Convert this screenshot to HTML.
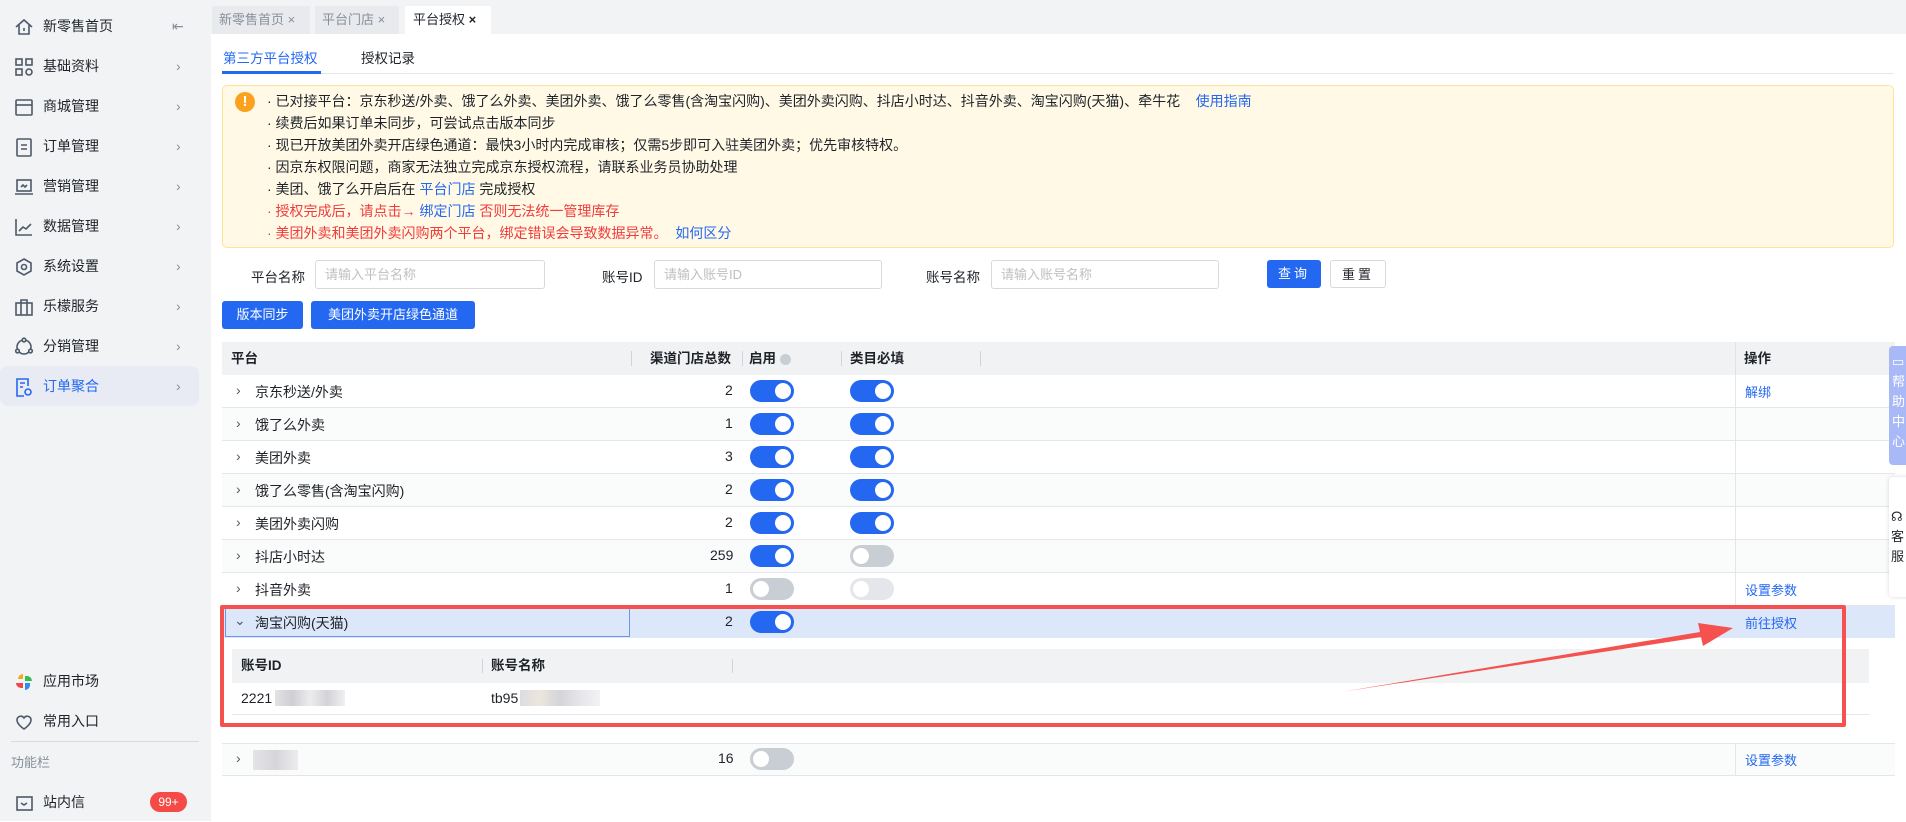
<!DOCTYPE html>
<html><head><meta charset="utf-8"><style>
*{box-sizing:border-box;margin:0;padding:0}
body{width:1906px;height:821px;overflow:hidden;background:#fff;font-family:"Liberation Sans","Noto Sans CJK SC",sans-serif;font-size:14px;color:#1f2329;position:relative}
.a{position:absolute;white-space:nowrap}
.side{left:0;top:0;width:211px;height:821px;background:#f2f3f5}
.mi{left:0;width:199px;height:40px;line-height:40px}
.mi .t{position:absolute;left:43px;top:0}
.mi .c{position:absolute;left:176px;top:0;color:#86909c;font-size:14px}
.mi svg{position:absolute;left:14px;top:11px}
.blue{color:#2468f2}
.tg{width:44px;height:22px;border-radius:11px;background:#2468f2}
.tg::after{content:"";position:absolute;right:3px;top:3px;width:16px;height:16px;border-radius:50%;background:#fff}
.tg.off{background:#c9cdd4}.tg.off::after{left:3px;right:auto}
.tg.dis{background:#e5e6eb}.tg.dis::after{left:3px;right:auto}
.row{left:222px;width:1673px;height:33px;border-bottom:1px solid #e5e6eb}
.input{height:29px;border:1px solid #d9d9d9;border-radius:3px;color:#bfbfbf;padding-left:9px;line-height:27px;font-size:13px}
.btn{height:28px;line-height:28px;border-radius:3px;background:#2468f2;color:#fff;text-align:center;font-size:13px}
.al{left:267px;font-size:14px;line-height:22px}
</style></head><body>
<div class="a side"></div>
<div class="a mi" style="top:6px"><svg width="20" height="20" viewBox="0 0 20 20" fill="none" stroke="#4e5969" stroke-width="1.6"><path d="M2 10L10 3l8 7M5 8v9h10V8M10 11v3"/></svg><span class="t">新零售首页</span><span class="c" style="left:172px">⇤</span></div>
<div class="a mi" style="top:46px"><svg width="20" height="20" viewBox="0 0 20 20" fill="none" stroke="#4e5969" stroke-width="1.6"><rect x="2" y="2" width="6" height="6"/><rect x="12" y="2" width="6" height="6"/><rect x="2" y="12" width="6" height="6"/><circle cx="15" cy="15" r="3"/></svg><span class="t">基础资料</span><span class="c">›</span></div>
<div class="a mi" style="top:86px"><svg width="20" height="20" viewBox="0 0 20 20" fill="none" stroke="#4e5969" stroke-width="1.6"><rect x="2" y="3" width="16" height="15" rx="1"/><path d="M2 8h16"/></svg><span class="t">商城管理</span><span class="c">›</span></div>
<div class="a mi" style="top:126px"><svg width="20" height="20" viewBox="0 0 20 20" fill="none" stroke="#4e5969" stroke-width="1.6"><rect x="3" y="2" width="14" height="17" rx="1"/><path d="M7 8h6M7 12h6"/></svg><span class="t">订单管理</span><span class="c">›</span></div>
<div class="a mi" style="top:166px"><svg width="20" height="20" viewBox="0 0 20 20" fill="none" stroke="#4e5969" stroke-width="1.6"><rect x="3" y="3" width="14" height="11"/><path d="M1 17h18M7 10l2-2 2 2 2-2"/></svg><span class="t">营销管理</span><span class="c">›</span></div>
<div class="a mi" style="top:206px"><svg width="20" height="20" viewBox="0 0 20 20" fill="none" stroke="#4e5969" stroke-width="1.6"><path d="M2 2v16h16M5 14l4-4 3 2 5-5"/></svg><span class="t">数据管理</span><span class="c">›</span></div>
<div class="a mi" style="top:246px"><svg width="20" height="20" viewBox="0 0 20 20" fill="none" stroke="#4e5969" stroke-width="1.6"><path d="M10 2l7 4v8l-7 4-7-4V6z"/><circle cx="10" cy="10" r="2.5"/></svg><span class="t">系统设置</span><span class="c">›</span></div>
<div class="a mi" style="top:286px"><svg width="20" height="20" viewBox="0 0 20 20" fill="none" stroke="#4e5969" stroke-width="1.6"><rect x="2" y="6" width="16" height="12"/><path d="M7 6V3h6v3M7 6v12M13 6v12"/></svg><span class="t">乐檬服务</span><span class="c">›</span></div>
<div class="a mi" style="top:326px"><svg width="20" height="20" viewBox="0 0 20 20" fill="none" stroke="#4e5969" stroke-width="1.6"><circle cx="10" cy="10" r="7"/><circle cx="10" cy="3" r="1.8" fill="#f2f3f5"/><circle cx="3.5" cy="14" r="1.8" fill="#f2f3f5"/><circle cx="16.5" cy="14" r="1.8" fill="#f2f3f5"/></svg><span class="t">分销管理</span><span class="c">›</span></div>
<div class="a mi" style="top:366px;background:#e8ebf3;border-radius:8px"><svg width="20" height="20" viewBox="0 0 20 20" fill="none" stroke="#2468f2" stroke-width="1.6"><path d="M14 9V2H3v17h7"/><path d="M6 6h5M6 10h3"/><circle cx="14" cy="15" r="3"/></svg><span class="t blue">订单聚合</span><span class="c blue">›</span></div>
<div class="a mi" style="top:661px"><svg width="20" height="20" viewBox="0 0 20 20"><path d="M9 2a5 5 0 0 0-5 5h5z" fill="#f5a623"/><path d="M11 9h7a5 5 0 0 0-5-5h-2z" fill="#2fbf4a"/><path d="M11 11v7a5 5 0 0 0 5-5v-2z" fill="#2f8cf2"/><path d="M2 11a5 5 0 0 0 5 5h2v-5z" fill="#f04848"/></svg><span class="t">应用市场</span></div>
<div class="a mi" style="top:701px"><svg width="20" height="20" viewBox="0 0 20 20" fill="none" stroke="#4e5969" stroke-width="1.6"><path d="M10 17s-7-4.5-7-9a3.8 3.8 0 0 1 7-2 3.8 3.8 0 0 1 7 2c0 4.5-7 9-7 9z"/></svg><span class="t">常用入口</span></div>
<div class="a" style="left:11px;top:741px;width:188px;height:1px;background:#d9dbe0"></div>
<div class="a" style="left:11px;top:752px;color:#86909c;font-size:13px">功能栏</div>
<div class="a mi" style="top:782px"><svg width="20" height="20" viewBox="0 0 20 20" fill="none" stroke="#4e5969" stroke-width="1.6"><rect x="3" y="4" width="15" height="13"/><path d="M7 10l3 2 3-2"/></svg><span class="t">站内信</span></div>
<div class="a" style="left:150px;top:792px;width:37px;height:20px;border-radius:10px;background:#f54a45;color:#fff;font-size:12px;text-align:center;line-height:20px">99+</div>

<div class="a" style="left:211px;top:0;width:1695px;height:34px;background:#f2f3f5"></div>
<div class="a" style="left:212px;top:6px;width:98px;height:28px;background:#e9eaed;color:#86909c;font-size:13px;line-height:28px;padding-left:7px">新零售首页 ×</div>
<div class="a" style="left:315px;top:6px;width:84px;height:28px;background:#e9eaed;color:#86909c;font-size:13px;line-height:28px;padding-left:7px">平台门店 ×</div>
<div class="a" style="left:405px;top:6px;width:86px;height:28px;background:#fff;font-size:13px;line-height:28px;padding-left:8px">平台授权 <b>×</b></div>
<div class="a blue" style="left:223px;top:47px;font-size:13.5px">第三方平台授权</div>
<div class="a" style="left:361px;top:47px;font-size:13.5px">授权记录</div>
<div class="a" style="left:222px;top:73px;width:1672px;height:1px;background:#e5e6eb"></div>
<div class="a" style="left:222px;top:71px;width:99px;height:3px;background:#2468f2"></div>
<div class="a" style="left:222px;top:85px;width:1672px;height:163px;background:#fff9e6;border:1px solid #ffe39a;border-radius:5px"></div>
<div class="a" style="left:235px;top:92px;width:20px;height:20px;border-radius:50%;background:#faa21e;color:#fff;font-weight:bold;text-align:center;line-height:20px;font-size:15px">!</div>
<div class="a al" style="top:90px">· 已对接平台：京东秒送/外卖、饿了么外卖、美团外卖、饿了么零售(含淘宝闪购)、美团外卖闪购、抖店小时达、抖音外卖、淘宝闪购(天猫)、牵牛花 &nbsp;&nbsp;&nbsp;<span class="blue">使用指南</span></div>
<div class="a al" style="top:112px">· 续费后如果订单未同步，可尝试点击版本同步</div>
<div class="a al" style="top:134px">· 现已开放美团外卖开店绿色通道：最快3小时内完成审核；仅需5步即可入驻美团外卖；优先审核特权。</div>
<div class="a al" style="top:156px">· 因京东权限问题，商家无法独立完成京东授权流程，请联系业务员协助处理</div>
<div class="a al" style="top:178px">· 美团、饿了么开启后在 <span class="blue">平台门店</span> 完成授权</div>
<div class="a al" style="top:200px;color:#f03c3c">· 授权完成后，请点击→ <span class="blue">绑定门店</span> 否则无法统一管理库存</div>
<div class="a al" style="top:222px;color:#f03c3c">· 美团外卖和美团外卖闪购两个平台，绑定错误会导致数据异常。 &nbsp;<span class="blue">如何区分</span></div>
<div class="a" style="left:251px;top:266px;font-size:13.5px">平台名称</div>
<div class="a input" style="left:315px;top:260px;width:230px">请输入平台名称</div>
<div class="a" style="left:602px;top:266px;font-size:13.5px">账号ID</div>
<div class="a input" style="left:654px;top:260px;width:228px">请输入账号ID</div>
<div class="a" style="left:926px;top:266px;font-size:13.5px">账号名称</div>
<div class="a input" style="left:991px;top:260px;width:228px">请输入账号名称</div>
<div class="a btn" style="left:1267px;top:260px;width:54px;letter-spacing:3px">查询</div>
<div class="a btn" style="left:1330px;top:260px;width:56px;background:#fff;border:1px solid #d9d9d9;color:#1f2329;letter-spacing:3px">重置</div>
<div class="a btn" style="left:222px;top:301px;width:81px">版本同步</div>
<div class="a btn" style="left:311px;top:301px;width:164px">美团外卖开店绿色通道</div>
<div class="a" style="left:222px;top:342px;width:1673px;height:33px;background:#f1f2f4;font-weight:bold;font-size:13.5px;line-height:33px">
<span class="a" style="left:9px">平台</span>
<span class="a" style="left:409px;top:9px;width:1px;height:15px;background:#d0d3d9"></span>
<span class="a" style="left:428px">渠道门店总数</span>
<span class="a" style="left:520px;top:9px;width:1px;height:15px;background:#d0d3d9"></span>
<span class="a" style="left:527px">启用 <span style="display:inline-block;width:11px;height:11px;border-radius:50%;background:#c9cdd4;vertical-align:middle"></span></span>
<span class="a" style="left:619px;top:9px;width:1px;height:15px;background:#d0d3d9"></span>
<span class="a" style="left:628px">类目必填</span>
<span class="a" style="left:758px;top:9px;width:1px;height:15px;background:#d0d3d9"></span>
<span class="a" style="left:1513px;top:0;width:1px;height:33px;background:#e0e2e6"></span>
<span class="a" style="left:1522px">操作</span>
</div>
<div class="a row" style="top:375px;background:#fff"></div>
<div class="a row" style="top:408px;background:#fafbfb"></div>
<div class="a row" style="top:441px;background:#fff"></div>
<div class="a row" style="top:474px;background:#fafbfb"></div>
<div class="a row" style="top:507px;background:#fff"></div>
<div class="a row" style="top:540px;background:#fafbfb"></div>
<div class="a row" style="top:573px;background:#fff"></div>
<div class="a row" style="top:606px;background:#dde7fa;border:none;height:32px"></div>
<div class="a row" style="top:743px;background:#fafbfb;border-top:1px solid #e5e6eb"></div>
<div class="a" style="left:1735px;top:375px;width:1px;height:231px;background:#e5e6eb"></div>
<div class="a" style="left:1735px;top:743px;width:1px;height:33px;background:#e5e6eb"></div>
<div class="a" style="left:236px;top:382px;color:#4e5969">›</div><div class="a" style="left:255px;top:382px">京东秒送/外卖</div><div class="a" style="left:725px;top:382px">2</div><div class="a tg" style="left:750px;top:380px"></div><div class="a tg" style="left:850px;top:380px"></div><div class="a blue" style="left:1745px;top:382px;font-size:13px">解绑</div>
<div class="a" style="left:236px;top:415px;color:#4e5969">›</div><div class="a" style="left:255px;top:415px">饿了么外卖</div><div class="a" style="left:725px;top:415px">1</div><div class="a tg" style="left:750px;top:413px"></div><div class="a tg" style="left:850px;top:413px"></div>
<div class="a" style="left:236px;top:448px;color:#4e5969">›</div><div class="a" style="left:255px;top:448px">美团外卖</div><div class="a" style="left:725px;top:448px">3</div><div class="a tg" style="left:750px;top:446px"></div><div class="a tg" style="left:850px;top:446px"></div>
<div class="a" style="left:236px;top:481px;color:#4e5969">›</div><div class="a" style="left:255px;top:481px">饿了么零售(含淘宝闪购)</div><div class="a" style="left:725px;top:481px">2</div><div class="a tg" style="left:750px;top:479px"></div><div class="a tg" style="left:850px;top:479px"></div>
<div class="a" style="left:236px;top:514px;color:#4e5969">›</div><div class="a" style="left:255px;top:514px">美团外卖闪购</div><div class="a" style="left:725px;top:514px">2</div><div class="a tg" style="left:750px;top:512px"></div><div class="a tg" style="left:850px;top:512px"></div>
<div class="a" style="left:236px;top:547px;color:#4e5969">›</div><div class="a" style="left:255px;top:547px">抖店小时达</div><div class="a" style="left:710px;top:547px">259</div><div class="a tg" style="left:750px;top:545px"></div><div class="a tg off" style="left:850px;top:545px"></div>
<div class="a" style="left:236px;top:580px;color:#4e5969">›</div><div class="a" style="left:255px;top:580px">抖音外卖</div><div class="a" style="left:725px;top:580px">1</div><div class="a tg off" style="left:750px;top:578px"></div><div class="a tg dis" style="left:850px;top:578px"></div><div class="a blue" style="left:1745px;top:580px;font-size:13px">设置参数</div>
<div class="a" style="left:225px;top:606px;width:405px;height:31px;border:1px solid #6f95e8;border-top:none"></div>
<div class="a" style="left:234px;top:612px;color:#4e5969">⌄</div><div class="a" style="left:255px;top:613px">淘宝闪购(天猫)</div><div class="a" style="left:725px;top:613px">2</div><div class="a tg" style="left:750px;top:611px"></div><div class="a blue" style="left:1745px;top:613px;font-size:13px">前往授权</div>
<div class="a" style="left:232px;top:649px;width:1637px;height:34px;background:#f1f2f4;font-weight:bold;font-size:13.5px;line-height:34px">
<span class="a" style="left:9px">账号ID</span><span class="a" style="left:250px;top:10px;width:1px;height:14px;background:#d0d3d9"></span>
<span class="a" style="left:259px">账号名称</span><span class="a" style="left:500px;top:10px;width:1px;height:14px;background:#d0d3d9"></span></div>
<div class="a" style="left:232px;top:714px;width:1637px;height:1px;background:#e5e6eb"></div>
<div class="a" style="left:241px;top:690px">2221</div><div class="a" style="left:275px;top:690px;width:70px;height:16px;background:linear-gradient(90deg,#e3e3e6,#cfcfd4,#ececee,#d4d4d8,#f0f0f2)"></div>
<div class="a" style="left:491px;top:690px">tb95</div><div class="a" style="left:520px;top:690px;width:80px;height:16px;background:linear-gradient(90deg,#dcdce0,#ece6dd,#d4d4d9,#e6e6ea,#f2f2f4)"></div>
<div class="a" style="left:236px;top:750px;color:#4e5969">›</div><div class="a" style="left:253px;top:750px;width:45px;height:20px;background:linear-gradient(90deg,#e4e4e7,#d6d6da,#ececee)"></div>
<div class="a" style="left:718px;top:750px">16</div><div class="a tg off" style="left:750px;top:748px"></div><div class="a blue" style="left:1745px;top:750px;font-size:13px">设置参数</div>
<div class="a" style="left:220px;top:605px;width:1626px;height:122px;border:4px solid #f5524f;border-radius:2px"></div>
<svg class="a" style="left:0;top:0" width="1906" height="821"><path d="M1341 692L1700 632L1698 623L1733 628L1703 646L1701 637Z" fill="#f5524f"/></svg>
<div class="a" style="left:1889px;top:346px;height:119px;background:#a9b9f7;border-radius:4px 0 0 4px;color:#fff;font-size:13px;line-height:20px;padding:6px 0 0 3px;white-space:normal;width:22px">▭<br>帮<br>助<br>中<br>心</div>
<div class="a" style="left:1889px;top:477px;width:20px;height:120px;background:#fff;border-radius:4px 0 0 4px;box-shadow:0 0 4px rgba(0,0,0,.15);font-size:13px;line-height:20px;padding:30px 0 0 2px;white-space:normal">☊<br>客<br>服</div>
</body></html>
